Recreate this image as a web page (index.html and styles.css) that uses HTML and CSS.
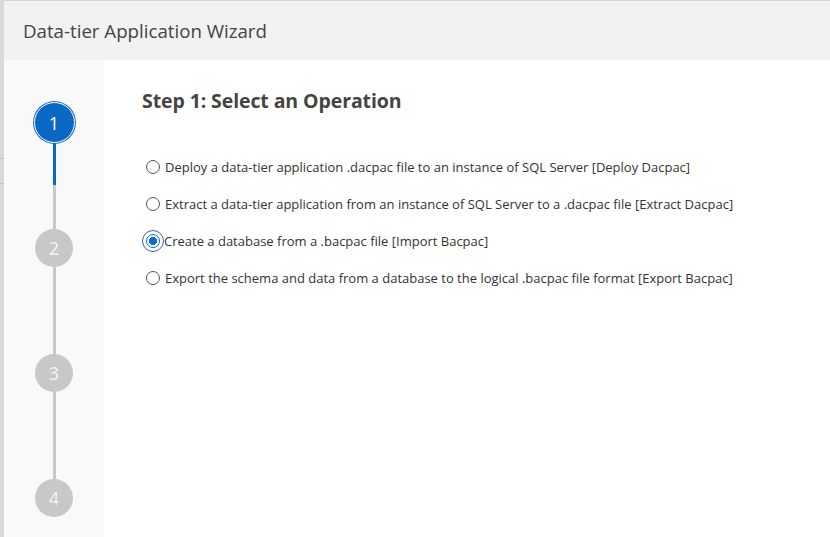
FILE: index.html
```html
<!DOCTYPE html>
<html lang="en">
<head>
<meta charset="utf-8">
<title>Data-tier Application Wizard</title>
<link rel="stylesheet" href="styles.css">
</head>
<body>
<div class="page">
  <div class="edge"></div>
  <div class="wizard">
    <header class="wizard-header">
      <h1 class="wizard-title">Data-tier Application Wizard</h1>
    </header>
    <div class="wizard-body">
      <nav class="steps">
        <div class="step step-active"><span>1</span></div>
        <div class="connector connector-active"></div>
        <div class="step"><span>2</span></div>
        <div class="connector"></div>
        <div class="step"><span>3</span></div>
        <div class="connector"></div>
        <div class="step"><span>4</span></div>
      </nav>
      <main class="content">
        <h2 class="step-heading">Step 1: Select an Operation</h2>
        <div class="options">
          <label class="option"><span class="radio"></span><span class="option-text">Deploy a data-tier application .dacpac file to an instance of SQL Server [Deploy Dacpac]</span></label>
          <label class="option"><span class="radio"></span><span class="option-text">Extract a data-tier application from an instance of SQL Server to a .dacpac file [Extract Dacpac]</span></label>
          <label class="option option-selected"><span class="radio radio-checked"></span><span class="option-text">Create a database from a .bacpac file [Import Bacpac]</span></label>
          <label class="option"><span class="radio"></span><span class="option-text">Export the schema and data from a database to the logical .bacpac file format [Export Bacpac]</span></label>
        </div>
      </main>
    </div>
  </div>
</div>
</body>
</html>
```

FILE: styles.css
```css
* { box-sizing: border-box; }
html, body {
  margin: 0;
  padding: 0;
  width: 830px;
  height: 537px;
  overflow: hidden;
  font-family: "Open Sans", "Noto Sans", sans-serif;
  color: #333;
  background: #fff;
}
.page {
  display: flex;
  height: 537px;
}
.edge {
  width: 4px;
  flex: none;
  background:
    linear-gradient(#b9c3d0, #b9c3d0) 0 158px / 4px 1px no-repeat,
    linear-gradient(#b9c3d0, #b9c3d0) 0 183px / 4px 1px no-repeat,
    #d9d9d9;
}
.wizard {
  flex: 1;
  display: flex;
  flex-direction: column;
}
.wizard-header {
  height: 60px;
  flex: none;
  background: #f2f2f2;
  border-top: 1px solid #d6d6d6;
  display: flex;
  align-items: center;
  padding-left: 19px;
}
.wizard-title {
  margin: 0;
  font-size: 18.7px;
  font-weight: 400;
  color: #444;
  padding-top: 0;
}
.wizard-body {
  flex: 1;
  display: flex;
}
.steps {
  width: 100px;
  flex: none;
  background: #f9f9f9;
  display: flex;
  flex-direction: column;
  align-items: center;
  padding-top: 42px;
}
.step {
  width: 38px;
  height: 38px;
  border-radius: 50%;
  background: #c8c8c8;
  color: #f4f4f4;
  display: flex;
  align-items: center;
  justify-content: center;
  font-size: 18px;
  flex: none;
}
.step-active {
  width: 41px;
  height: 41px;
  background: #0b67c4;
  color: #fff;
  border: 1px solid #fff;
  box-shadow: 0 0 0 1px #1a6fcb;
}
.connector {
  width: 3px;
  height: 87px;
  background: #c8c8c8;
  flex: none;
}
.connector-active {
  height: 86px;
  background: linear-gradient(#0b67c4 0, #0b67c4 42px, #c8c8c8 42px);
}
.content {
  flex: 1;
  padding: 28px 0 0 38px;
}
.step-heading {
  margin: 0;
  font-size: 19.5px;
  font-weight: 700;
  color: #444;
  line-height: 26px;
  letter-spacing: -0.1px;
}
.options {
  display: flex;
  flex-direction: column;
  gap: 17px;
  margin-top: 43px;
}
.option {
  display: flex;
  align-items: center;
  height: 20px;
  font-size: 13px;
  color: #333;
}
.radio {
  width: 14px;
  height: 14px;
  border-radius: 50%;
  border: 1px solid #555;
  margin: 0 5px 0 4px;
  flex: none;
  background: #fff;
}
.radio-checked {
  border: 1px solid #0a6ad8;
  background: radial-gradient(circle, #0a6ad8 0 3.8px, #fff 4.3px);
  outline: 1px solid #1f6bb8;
  outline-offset: 3px;
  margin-right: 4px;
}
```
